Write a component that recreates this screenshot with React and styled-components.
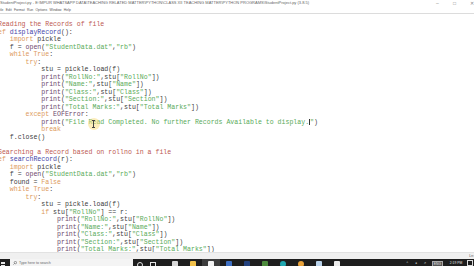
import React from 'react';
import styled, { createGlobalStyle } from 'styled-components';

const GlobalStyle = createGlobalStyle`
  html, body {
    margin: 0;
    padding: 0;
    width: 474px;
    height: 266px;
    overflow: hidden;
    background: #fff;
  }
`;

const colors = {
  cm: '#bd5a52',
  kw: '#dd9a5c',
  str: '#5aab5a',
  def: '#4545a8',
  bi: '#6e4a6e',
  plain: '#3c3c3c',
};

const Screen = styled.div`
  width: 474px;
  height: 266px;
  display: flex;
  flex-direction: column;
  overflow: hidden;
`;

const Window = styled.div`
  flex: 1;
  display: flex;
  flex-direction: column;
  min-height: 0;
  background: #fff;
`;

const TitleBar = styled.div`
  height: 6px;
  display: flex;
  align-items: center;
  justify-content: space-between;
  font-family: 'Liberation Sans', Arial, sans-serif;
  font-size: 4px;
  color: #666;
  white-space: nowrap;
  overflow: hidden;
`;

const TitleText = styled.span`
  margin-top: -2px;
`;

const WindowControls = styled.div`
  display: flex;
  margin-right: -6px;
`;

const Control = styled.span`
  width: 17px;
  text-align: center;
  font-size: 5px;
  color: #888;
`;

const MenuBar = styled.div`
  height: 7px;
  display: flex;
  align-items: center;
  gap: 2.3px;
  margin-left: -2px;
  font-family: 'Liberation Sans', Arial, sans-serif;
  font-size: 3.4px;
  color: #555;
  border-bottom: 1px solid #dcdcdc;
`;

const Editor = styled.div`
  position: relative;
  flex: 1;
  min-height: 0;
  overflow: hidden;
  padding-top: 7px;
`;

const Code = styled.div`
  margin-left: -6px;
  font-family: 'Liberation Mono', 'Courier New', monospace;
  font-size: 6.57px;
  line-height: 7.53px;
  white-space: pre;
`;

const Line = styled.div`
  height: 7.53px;
`;

const Tok = styled.span`
  color: ${p => colors[p.$t] || colors.plain};
`;

const Caret = styled.span`
  display: inline-block;
  width: 0;
  height: 6px;
  border-left: 1px solid #333;
  vertical-align: -1px;
`;

const MouseHalo = styled.div`
  position: absolute;
  left: 88px;
  top: 104px;
  width: 12px;
  height: 12px;
  border-radius: 50%;
  background: rgba(250, 220, 120, 0.5);
`;

const IBeam = styled.div`
  position: absolute;
  left: 93px;
  top: 106px;
  width: 1px;
  height: 8px;
  background: #444;
  &::before, &::after {
    content: '';
    position: absolute;
    left: -1px;
    width: 3px;
    height: 1px;
    background: #444;
  }
  &::before { top: 0; }
  &::after { bottom: 0; }
`;

const StatusBar = styled.div`
  height: 7px;
  display: flex;
  align-items: center;
  justify-content: flex-end;
  background: #f0f0f0;
  border-top: 1px solid #e2e2e2;
  box-sizing: border-box;
  font-family: 'Liberation Sans', Arial, sans-serif;
  font-size: 3.5px;
  color: #555;
  white-space: nowrap;
  overflow: hidden;
`;

const StatusText = styled.span`
  margin-right: -18px;
`;

const Taskbar = styled.div`
  height: 7px;
  background: #1e1e1e;
  display: flex;
  align-items: flex-start;
  overflow: hidden;
`;

const StartButton = styled.div`
  width: 10px;
  display: grid;
  grid-template-columns: 2px 2px;
  gap: 0.5px;
  padding: 3px 0 0 0.5px;
  box-sizing: border-box;
  & > i {
    display: block;
    width: 2px;
    height: 2px;
    background: #e8e8e8;
  }
`;

const SearchBox = styled.div`
  width: 123px;
  height: 7px;
  background: #f4f4f4;
  display: flex;
  align-items: center;
  gap: 2px;
  padding-left: 3px;
  box-sizing: border-box;
  font-family: 'Liberation Sans', Arial, sans-serif;
  font-size: 3.6px;
  color: #666;
  white-space: nowrap;
`;

const Slot = styled.div`
  width: ${p => p.$w || 18}px;
  height: 7px;
  display: flex;
  justify-content: center;
  padding-top: 2px;
  box-sizing: border-box;
  background: ${p => (p.$active ? '#3d3d3d' : 'transparent')};
`;

const AppIcon = styled.div`
  width: ${p => p.$size || 6}px;
  height: 6px;
  background: ${p => p.$color};
  border-radius: ${p => (p.$round ? '50%' : '1px')};
`;

const OutlineIcon = styled.div`
  width: 4px;
  height: 4px;
  margin-top: 1px;
  border: 0.8px solid #e6e6e6;
  border-radius: ${p => (p.$round ? '50%' : '0')};
`;

const Spacer = styled.div`
  flex: 1;
`;

const Tray = styled.div`
  display: flex;
  align-items: flex-start;
  gap: 4px;
  padding-top: 1.5px;
  font-family: 'Liberation Sans', Arial, sans-serif;
  font-size: 3.3px;
  color: #e6e6e6;
  white-space: nowrap;
`;

const TrayGlyph = styled.span`
  width: 5px;
  text-align: center;
  color: #d0d0d0;
`;

const LangBox = styled.span`
  padding: 0 1px;
  border: 0.5px solid #aaa;
  background: #555;
  line-height: 4px;
`;

const Clock = styled.span`
  width: 18px;
  text-align: center;
`;

const Notify = styled.div`
  width: 4px;
  height: 4px;
  margin: 0.5px 1px 0 2px;
  border: 0.8px solid #ddd;
`;

const source = [
  '#Reading the Records of file',
  'def displayRecord():',
  '    import pickle',
  '    f = open("StudentData.dat","rb")',
  '    while True:',
  '        try:',
  '            stu = pickle.load(f)',
  '            print("RollNo:",stu["RollNo"])',
  '            print("Name:",stu["Name"])',
  '            print("Class:",stu["Class"])',
  '            print("Section:",stu["Section"])',
  '            print("Total Marks:",stu["Total Marks"])',
  '        except EOFError:',
  '            print("File Read Completed. No further Records Available to display.")',
  '            break',
  '    f.close()',
  '',
  '#Searching a Record based on rollno in a file',
  'def searchRecord(r):',
  '    import pickle',
  '    f = open("StudentData.dat","rb")',
  '    found = False',
  '    while True:',
  '        try:',
  '            stu = pickle.load(f)',
  '            if stu["RollNo"] == r:',
  '                print("RollNo:",stu["RollNo"])',
  '                print("Name:",stu["Name"])',
  '                print("Class:",stu["Class"])',
  '                print("Section:",stu["Section"])',
  '                print("Total Marks:",stu["Total Marks"])',
];

const KW = new Set(['def', 'import', 'while', 'True', 'False', 'try', 'except', 'break', 'if']);
const BI = new Set(['open', 'print', 'EOFError']);

function tokenize(line) {
  if (line.trimStart().startsWith('#')) return [{ t: 'cm', v: line }];
  const out = [];
  const re = /("[^"]*")|([A-Za-z_]\w*)|([^A-Za-z_"]+)/g;
  let m;
  let afterDef = false;
  while ((m = re.exec(line))) {
    if (m[1]) out.push({ t: 'str', v: m[1] });
    else if (m[2]) {
      const w = m[2];
      if (afterDef) {
        out.push({ t: 'def', v: w });
        afterDef = false;
      } else if (KW.has(w)) {
        out.push({ t: 'kw', v: w });
        if (w === 'def') afterDef = true;
      } else if (BI.has(w)) out.push({ t: 'bi', v: w });
      else out.push({ t: 'plain', v: w });
    } else out.push({ t: 'plain', v: m[3] });
  }
  return out;
}

const caretLine = 13;
const caretCol = source[caretLine].indexOf('.")') + 1;

function CodeLine({ text, caret }) {
  const tokens = tokenize(text);
  let col = 0;
  const parts = [];
  tokens.forEach((tok, i) => {
    const start = col;
    col += tok.v.length;
    if (caret != null && caret >= start && caret < col) {
      const cut = caret - start;
      parts.push(<Tok key={i + 'a'} $t={tok.t}>{tok.v.slice(0, cut)}</Tok>);
      parts.push(<Caret key="caret" />);
      parts.push(<Tok key={i + 'b'} $t={tok.t}>{tok.v.slice(cut)}</Tok>);
    } else {
      parts.push(<Tok key={i} $t={tok.t}>{tok.v}</Tok>);
    }
  });
  return <Line>{parts.length ? parts : ' '}</Line>;
}

const menus = ['File', 'Edit', 'Format', 'Run', 'Options', 'Window', 'Help'];

const apps = [
  { color: '#d8d8d8', w: 18 },
  { color: '#f2c14a', w: 18 },
  { color: '#f4f4f4', w: 18, active: true },
  { color: '#3e6fc2', w: 18 },
  { color: '#24427e', w: 18 },
  { color: '#4c8a3c', w: 18 },
  { color: '#1fa7b0', w: 18, round: true },
  { color: '#e9a23a', w: 18, round: true },
  { color: '#b9d2ea', w: 18 },
  { color: '#ececec', w: 18 },
];

export default function App() {
  return (
    <Screen>
      <GlobalStyle />
      <Window>
        <TitleBar>
          <TitleText>
            StudentProject.py - E:\MPUR WHATSAPP DATA\TEACHING RELATED MATTER\PYTHON\CLASS XII TEACHING MATTER\PYTHON PROGRAMS\StudentProject.py (3.8.5)
          </TitleText>
          <WindowControls>
            <Control>&#8211;</Control>
            <Control>&#9633;</Control>
            <Control>&#10005;</Control>
          </WindowControls>
        </TitleBar>
        <MenuBar>
          {menus.map(m => (
            <span key={m}>{m}</span>
          ))}
        </MenuBar>
        <Editor>
          <Code>
            {source.map((l, i) => (
              <CodeLine key={i} text={l} caret={i === caretLine ? caretCol : null} />
            ))}
          </Code>
          <MouseHalo />
          <IBeam />
        </Editor>
        <StatusBar>
          <StatusText>Ln: 35 &nbsp;Col: 71</StatusText>
        </StatusBar>
      </Window>
      <Taskbar>
        <StartButton>
          <i /><i /><i /><i />
        </StartButton>
        <SearchBox>
          <svg width="4" height="4" viewBox="0 0 10 10">
            <circle cx="6" cy="4" r="3" fill="none" stroke="#555" strokeWidth="1.4" />
            <line x1="3.8" y1="6.2" x2="1" y2="9" stroke="#555" strokeWidth="1.4" />
          </svg>
          <span>Type here to search</span>
        </SearchBox>
        <Slot $w={14}>
          <OutlineIcon $round />
        </Slot>
        <Slot $w={12}>
          <OutlineIcon />
        </Slot>
        <Slot $w={7} />
        {apps.map((a, i) => (
          <Slot key={i} $w={a.w} $active={a.active}>
            <AppIcon $color={a.color} $round={a.round} />
          </Slot>
        ))}
        <Spacer />
        <Tray>
          <TrayGlyph>^</TrayGlyph>
          <TrayGlyph>&#9679;</TrayGlyph>
          <TrayGlyph>&#9836;</TrayGlyph>
          <LangBox>ENG</LangBox>
          <Clock>2:19 PM</Clock>
        </Tray>
        <Notify />
      </Taskbar>
    </Screen>
  );
}
